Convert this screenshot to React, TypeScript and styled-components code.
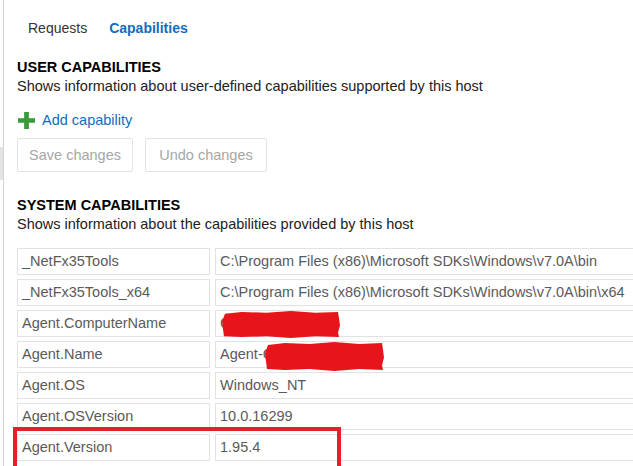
import React from "react";
import styled, { createGlobalStyle } from "styled-components";

const GlobalStyle = createGlobalStyle`
  html, body {
    margin: 0;
    padding: 0;
    background: #ffffff;
    overflow: hidden;
  }
  body {
    font-family: "Segoe UI", "Liberation Sans", Arial, sans-serif;
    font-size: 14.5px;
    color: #212121;
  }
`;

const capabilities: { name: string; value: string; masked?: "name" | "agent" }[] = [
  { name: "_NetFx35Tools", value: "C:\\Program Files (x86)\\Microsoft SDKs\\Windows\\v7.0A\\bin" },
  { name: "_NetFx35Tools_x64", value: "C:\\Program Files (x86)\\Microsoft SDKs\\Windows\\v7.0A\\bin\\x64" },
  { name: "Agent.ComputerName", value: "C", masked: "name" },
  { name: "Agent.Name", value: "Agent-C", masked: "agent" },
  { name: "Agent.OS", value: "Windows_NT" },
  { name: "Agent.OSVersion", value: "10.0.16299" },
  { name: "Agent.Version", value: "1.95.4" },
];

const App: React.FC = () => {
  return (
    <>
      <GlobalStyle />
      <Page>
        <Splitter>
          <Grip />
        </Splitter>
        <Content>
          <Tabs>
            <Tab>Requests</Tab>
            <Tab active>Capabilities</Tab>
          </Tabs>

          <SectionTitle>USER CAPABILITIES</SectionTitle>
          <Description>Shows information about user-defined capabilities supported by this host</Description>

          <AddLink>
            <PlusIcon viewBox="0 0 18 18" width="17" height="17">
              <path d="M6.5 0h5v6.5H18v5h-6.5V18h-5v-6.5H0v-5h6.5z" fill="#3a9a3a" />
            </PlusIcon>
            Add capability
          </AddLink>

          <ButtonRow>
            <Button disabled width={116}>Save changes</Button>
            <Button disabled width={122}>Undo changes</Button>
          </ButtonRow>

          <SectionTitle system>SYSTEM CAPABILITIES</SectionTitle>
          <Description>Shows information about the capabilities provided by this host</Description>

          <Table>
            {capabilities.map((c) => (
              <React.Fragment key={c.name}>
                <Cell>{c.name}</Cell>
                <Cell>
                  {c.value}
                  {c.masked && (
                    <Scribble
                      viewBox="0 0 120 30"
                      preserveAspectRatio="none"
                      masked={c.masked}
                    >
                      <path
                        d="M3 3 L20 1 L45 2 L70 0 L95 2 L118 1 L119 8 L120 16 L118 24 L119 29 L95 28 L70 30 L45 28 L20 29 L2 28 L1 20 L0 12 L2 6 Z"
                        fill="#e8141c"
                      />
                    </Scribble>
                  )}
                </Cell>
              </React.Fragment>
            ))}
          </Table>
        </Content>
        <Highlight />
      </Page>
    </>
  );
};

export default App;

const Page = styled.div`
  position: relative;
  width: 633px;
  height: 466px;
  overflow: hidden;
  display: flex;
`;

const Splitter = styled.div`
  position: relative;
  width: 3px;
  border-right: 1px solid #d4d4d4;
  flex: none;
`;

const Grip = styled.div`
  position: absolute;
  top: 147px;
  left: 0;
  width: 3px;
  height: 33px;
  background: #e4e4e4;
`;

const Content = styled.div`
  flex: 1;
  padding-left: 13px;
  min-width: 0;
`;

const Tabs = styled.div`
  display: flex;
  gap: 22px;
  padding: 18px 0 0 11px;
  height: 22px;
`;

const Tab = styled.div<{ active?: boolean }>`
  font-size: 14px;
  line-height: 20px;
  color: ${(p) => (p.active ? "#106ebe" : "#333333")};
  font-weight: ${(p) => (p.active ? 700 : 400)};
`;

const SectionTitle = styled.div<{ system?: boolean }>`
  margin-top: ${(p) => (p.system ? "24px" : "18px")};
  font-weight: 700;
  line-height: 19px;
  color: #000000;
`;

const Description = styled.div`
  line-height: 19px;
  color: #212121;
`;

const AddLink = styled.div`
  display: flex;
  align-items: center;
  gap: 7px;
  margin-top: 15px;
  padding-left: 1px;
  line-height: 18px;
  color: #106ebe;
`;

const PlusIcon = styled.svg`
  display: block;
  width: 17px;
  height: 17px;
`;

const ButtonRow = styled.div`
  display: flex;
  gap: 12px;
  margin-top: 9px;
`;

const Button = styled.button<{ width: number }>`
  width: ${(p) => p.width}px;
  height: 34px;
  padding: 0;
  text-align: center;
  background: #ffffff;
  border: 1px solid #e3e3e3;
  border-radius: 2px;
  font-family: inherit;
  font-size: 14.5px;
  color: #a6a6a6;
`;

const Table = styled.div`
  display: grid;
  grid-template-columns: 193px 440px;
  column-gap: 5px;
  row-gap: 4px;
  margin-top: 14px;
`;

const Cell = styled.div`
  position: relative;
  box-sizing: border-box;
  height: 27px;
  padding: 0 4px;
  border: 1px solid #e2e2e2;
  line-height: 25px;
  color: #5a5a5a;
  white-space: nowrap;
`;

const Scribble = styled.svg<{ masked: "name" | "agent" }>`
  position: absolute;
  display: block;
  top: 0;
  left: ${(p) => (p.masked === "name" ? "6px" : "49px")};
  width: ${(p) => (p.masked === "name" ? "118px" : "119px")};
  height: ${(p) => (p.masked === "name" ? "27px" : "29px")};
`;

const Highlight = styled.div`
  position: absolute;
  left: 13px;
  top: 427px;
  width: 328px;
  height: 50px;
  box-sizing: border-box;
  border: 4px solid #e3212b;
  pointer-events: none;
`;
